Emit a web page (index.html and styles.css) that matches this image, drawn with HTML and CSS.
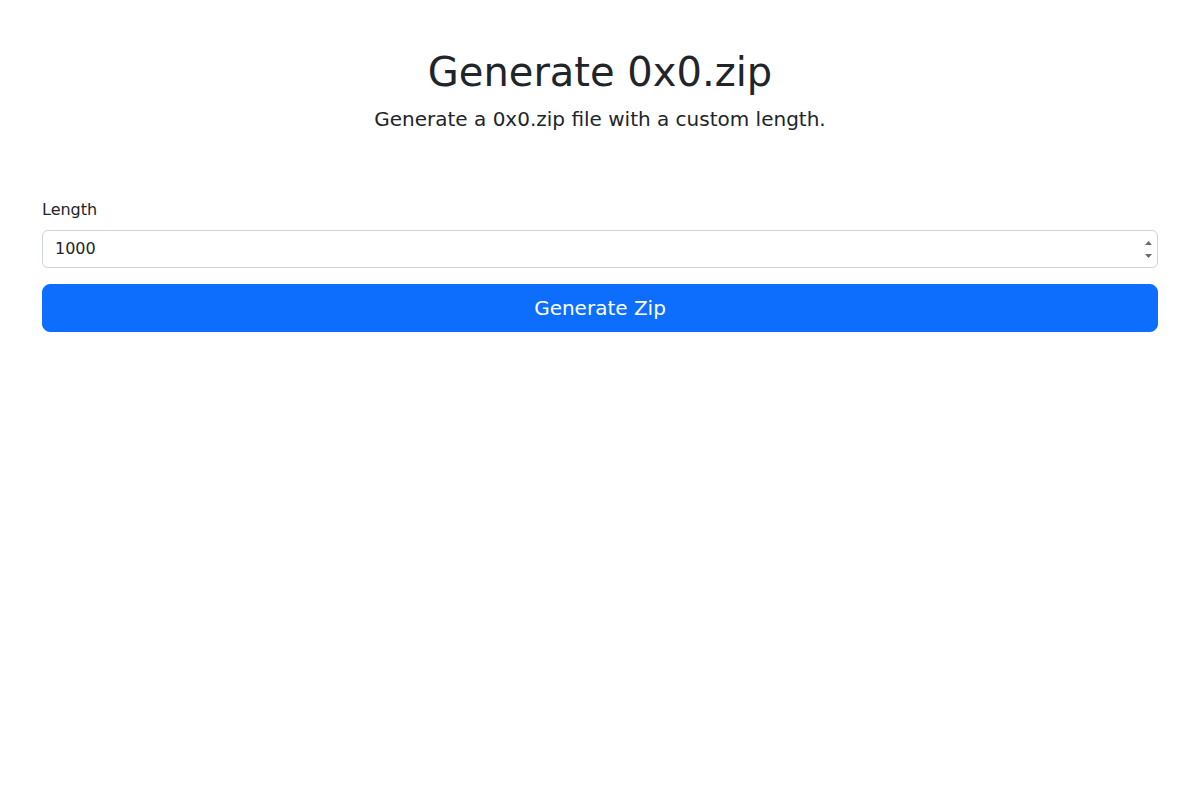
FILE: index.html
```html
<!DOCTYPE html>
<html lang="en">
<head>
<meta charset="utf-8">
<title>Generate 0x0.zip</title>
<link rel="stylesheet" href="styles.css">
</head>
<body>
<main class="container">
  <header class="intro">
    <h1 class="title">Generate 0x0.zip</h1>
    <p class="lead">Generate a 0x0.zip file with a custom length.</p>
  </header>
  <form class="gen-form" onsubmit="return false">
    <div class="field">
      <label class="form-label" for="length">Length</label>
      <div class="number-wrap">
        <input class="form-control" type="number" id="length" value="1000">
        <span class="spinner" aria-hidden="true">
          <svg width="7" height="4" viewBox="0 0 7 4"><path d="M0 4L3.5 0L7 4Z" fill="#6b6b6b"/></svg>
          <svg width="7" height="4" viewBox="0 0 7 4"><path d="M0 0L3.5 4L7 0Z" fill="#6b6b6b"/></svg>
        </span>
      </div>
    </div>
    <button class="btn-primary" type="submit">Generate Zip</button>
  </form>
</main>
</body>
</html>
```
FILE: styles.css
```css
*, *::before, *::after { box-sizing: border-box; }
html, body { margin: 0; }
body {
  font-family: "DejaVu Sans", sans-serif;
  font-size: 16px;
  line-height: 1.5;
  color: #212529;
  background: #fff;
}
.container {
  max-width: 1140px;
  margin: 0 auto;
  padding: 48px 12px 0;
}
.intro {
  text-align: center;
  margin-bottom: 64px;
}
.title {
  font-size: 40px;
  font-weight: 500;
  line-height: 1.2;
  margin: 0 0 8px;
}
.lead {
  font-size: 20px;
  font-weight: 400;
  margin: 0 0 16px;
}
.field { margin-bottom: 16px; }
.form-label {
  display: inline-block;
  margin-bottom: 8px;
}
.number-wrap { position: relative; }
.form-control {
  display: block;
  width: 100%;
  padding: 6px 12px;
  font: inherit;
  line-height: 1.5;
  color: #212529;
  background: #fff;
  border: 1px solid #ced4da;
  border-radius: 6px;
  -moz-appearance: textfield;
  appearance: textfield;
}
.form-control::-webkit-inner-spin-button,
.form-control::-webkit-outer-spin-button {
  -webkit-appearance: none;
  margin: 0;
}
.spinner {
  position: absolute;
  right: 6px;
  top: 11px;
  display: flex;
  flex-direction: column;
  gap: 9px;
  pointer-events: none;
}
.spinner svg { display: block; }
.btn-primary {
  display: block;
  width: 100%;
  padding: 8px 16px;
  font-family: inherit;
  font-size: 20px;
  line-height: 1.5;
  color: #fff;
  background: #0d6efd;
  border: 1px solid #0d6efd;
  border-radius: 8px;
  cursor: pointer;
}
```
